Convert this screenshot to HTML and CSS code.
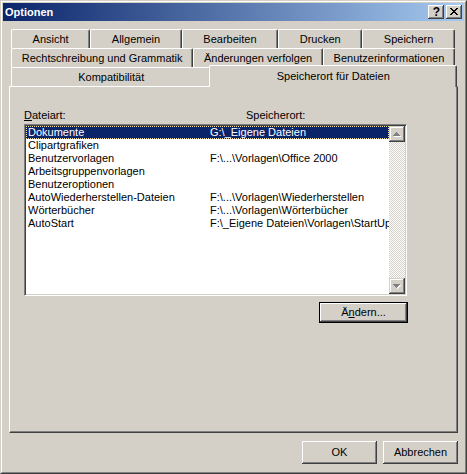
FILE: index.html
```html
<!DOCTYPE html>
<html lang="de">
<head>
<meta charset="utf-8">
<title>Optionen</title>
<link rel="stylesheet" href="styles.css">
</head>
<body>
<div class="window">
  <div class="window-inner">
    <div class="titlebar">
      <span class="title">Optionen</span>
      <div class="title-buttons">
        <div class="cap-btn help">?</div>
        <div class="cap-btn close">
          <svg width="16" height="14" viewBox="0 0 16 14" shape-rendering="crispEdges">
            <path d="M4 3h2v1h1v1h2v-1h1v-1h2v1h-1v1h-1v1h-1v1h1v1h1v1h1v1h-2v-1h-1v-1h-2v1h-1v1h-2v-1h1v-1h1v-1h1v-1h-1v-1h-1v-1h-1z" fill="#000"/>
          </svg>
        </div>
      </div>
    </div>

    <div class="content">
      <div class="tabs">
        <div class="tab-row">
          <div class="tab">Ansicht</div>
          <div class="tab">Allgemein</div>
          <div class="tab">Bearbeiten</div>
          <div class="tab">Drucken</div>
          <div class="tab">Speichern</div>
        </div>
        <div class="tab-row">
          <div class="tab">Rechtschreibung und Grammatik</div>
          <div class="tab">Änderungen verfolgen</div>
          <div class="tab">Benutzerinformationen</div>
        </div>
        <div class="tab-row">
          <div class="tab">Kompatibilität</div>
          <div class="tab tab-active">Speicherort für Dateien</div>
        </div>
      </div>

      <div class="panel">
        <div class="labels">
          <span class="label label-type"><u>D</u>ateiart:</span>
          <span class="label">Speicherort:</span>
        </div>
        <div class="listbox">
          <div class="list-items">
            <div class="item item-selected"><span>Dokumente</span><span>G:\_Eigene Dateien</span></div>
            <div class="item"><span>Clipartgrafiken</span><span></span></div>
            <div class="item"><span>Benutzervorlagen</span><span>F:\...\Vorlagen\Office 2000</span></div>
            <div class="item"><span>Arbeitsgruppenvorlagen</span><span></span></div>
            <div class="item"><span>Benutzeroptionen</span><span></span></div>
            <div class="item"><span>AutoWiederherstellen-Dateien</span><span>F:\...\Vorlagen\Wiederherstellen</span></div>
            <div class="item"><span>Wörterbücher</span><span>F:\...\Vorlagen\Wörterbücher</span></div>
            <div class="item"><span>AutoStart</span><span>F:\_Eigene Dateien\Vorlagen\StartUp</span></div>
          </div>
          <div class="scrollbar">
            <div class="sb-btn">
              <svg width="16" height="16" viewBox="0 0 16 16" shape-rendering="crispEdges">
                <g fill="#fff"><rect x="8" y="7" width="1" height="1"/><rect x="7" y="8" width="3" height="1"/><rect x="6" y="9" width="5" height="1"/><rect x="5" y="10" width="7" height="1"/></g>
                <g fill="#808080"><rect x="7" y="6" width="1" height="1"/><rect x="6" y="7" width="3" height="1"/><rect x="5" y="8" width="5" height="1"/><rect x="4" y="9" width="7" height="1"/></g>
              </svg>
            </div>
            <div class="sb-track"></div>
            <div class="sb-btn">
              <svg width="16" height="16" viewBox="0 0 16 16" shape-rendering="crispEdges">
                <g fill="#fff"><rect x="5" y="7" width="7" height="1"/><rect x="6" y="8" width="5" height="1"/><rect x="7" y="9" width="3" height="1"/><rect x="8" y="10" width="1" height="1"/></g>
                <g fill="#808080"><rect x="4" y="6" width="7" height="1"/><rect x="5" y="7" width="5" height="1"/><rect x="6" y="8" width="3" height="1"/><rect x="7" y="9" width="1" height="1"/></g>
              </svg>
            </div>
          </div>
        </div>
        <div class="change-row">
          <div class="button button-default">Ä<u>n</u>dern...</div>
        </div>
      </div>

      <div class="dialog-buttons">
        <div class="button">OK</div>
        <div class="button">Abbrechen</div>
      </div>
    </div>
  </div>
</div>
</body>
</html>
```

FILE: styles.css
```css
* { box-sizing: border-box; }

html, body {
  margin: 0;
  padding: 0;
  background: #D4D0C8;
}

body {
  font-family: "Liberation Sans", Arial, sans-serif;
  font-size: 11px;
  color: #000;
}

u { text-decoration: underline; text-underline-offset: 1px; }

.window {
  width: 467px;
  height: 474px;
  background: #D4D0C8;
  border: 1px solid;
  border-color: #D4D0C8 #404040 #404040 #D4D0C8;
}

.window-inner {
  height: 100%;
  border: 1px solid;
  border-color: #fff #808080 #808080 #fff;
  padding: 1px;
  display: flex;
  flex-direction: column;
}

.titlebar {
  height: 18px;
  flex: none;
  background: linear-gradient(to right, #0A246A, #A6CAF0);
  display: flex;
  align-items: center;
  justify-content: space-between;
  padding: 0 2px 0 2px;
}

.title {
  color: #fff;
  font-weight: bold;
  font-size: 11px;
  line-height: 13px;
}

.title-buttons {
  display: flex;
  gap: 2px;
}

.cap-btn {
  width: 16px;
  height: 14px;
  background: #D4D0C8;
  box-shadow: inset -1px -1px #404040, inset 1px 1px #fff, inset -2px -2px #808080;
  display: flex;
  align-items: center;
  justify-content: center;
}

.cap-btn svg { display: block; }

.help {
  font-weight: bold;
  font-size: 12px;
  line-height: 14px;
  padding-left: 1px;
}

.content {
  flex: 1;
  display: flex;
  flex-direction: column;
  padding: 8px 6px 0 6px;
}

.tabs {
  height: 57px;
  position: relative;
  z-index: 2;
}

.tab-row {
  display: flex;
  height: 19px;
  margin: 0 3px 0 2px;
}

.tab {
  flex: 1 1 auto;
  height: 19px;
  background: #D4D0C8;
  border-top: 1px solid #fff;
  border-left: 1px solid #fff;
  border-right: 1px solid #404040;
  box-shadow: inset -1px 0 #808080;
  border-radius: 2px 2px 0 0;
  text-align: center;
  white-space: nowrap;
  line-height: 13px;
  padding-top: 3px;
}

.tab-active {
  position: relative;
  height: 22px;
  margin: -2px -2px 0 -2px;
  padding-top: 4px;
  z-index: 3;
}

.panel {
  height: 347px;
  flex: none;
  border: 1px solid;
  border-color: #fff #404040 #404040 #fff;
  box-shadow: inset -1px -1px #808080;
  padding: 22px 0 0 14px;
  position: relative;
  z-index: 1;
}

.labels {
  display: flex;
  height: 13px;
  line-height: 13px;
}

.label-type { width: 222px; }

.listbox {
  margin-top: 2px;
  width: 383px;
  height: 172px;
  background: #fff;
  border: 1px solid;
  border-color: #808080 #fff #fff #808080;
  box-shadow: inset 1px 1px #404040, inset -1px -1px #D4D0C8;
  padding: 1px;
  display: flex;
}

.list-items {
  flex: 1;
  min-width: 0;
}

.item {
  display: grid;
  grid-template-columns: 182px 1fr;
  height: 13px;
  line-height: 13px;
  padding-left: 2px;
  white-space: nowrap;
}

.item-selected {
  background: #0A246A;
  color: #fff;
  outline: 1px dotted #F2DFA0;
  outline-offset: -1px;
}

.scrollbar {
  width: 16px;
  display: flex;
  flex-direction: column;
}

.sb-btn {
  width: 16px;
  height: 16px;
  flex: none;
  background: #D4D0C8;
  box-shadow: inset -1px -1px #404040, inset 1px 1px #D4D0C8, inset -2px -2px #808080, inset 2px 2px #fff;
}

.sb-btn svg { display: block; }

.sb-track {
  flex: 1;
  background: repeating-conic-gradient(#D4D0C8 0 25%, #fff 0 50%) 0 0 / 2px 2px;
}

.change-row {
  width: 384px;
  display: flex;
  justify-content: flex-end;
  margin-top: 6px;
}

.button {
  width: 75px;
  height: 23px;
  background: #D4D0C8;
  box-shadow: inset -1px -1px #404040, inset 1px 1px #fff, inset -2px -2px #808080, inset 2px 2px #D4D0C8;
  display: flex;
  align-items: center;
  justify-content: center;
  line-height: 13px;
}

.button-default {
  width: 89px;
  height: 21px;
  border: 1px solid #000;
  box-shadow: inset -1px -1px #404040, inset 1px 1px #fff, inset -2px -2px #808080;
}

.dialog-buttons {
  display: flex;
  justify-content: flex-end;
  gap: 6px;
  margin-top: 8px;
  padding-right: 0;
}
```
